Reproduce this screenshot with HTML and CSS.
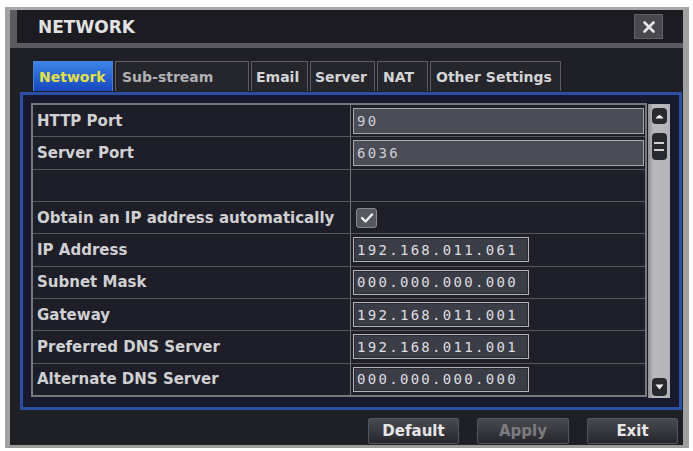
FILE: index.html
```html
<!DOCTYPE html>
<html lang="en">
<head>
  <meta charset="UTF-8">
  <meta name="viewport" content="width=device-width, initial-scale=1.0">
  <title>Network</title>
  <link rel="stylesheet" href="styles.css">
</head>
<body>

  <div class="window">
    <div class="titlebar">
      <span class="title">NETWORK</span>
      <button class="close" type="button">
        <svg width="14" height="14" viewBox="0 0 14 14">
          <path d="M2.5 2.5 L11.5 11.5 M11.5 2.5 L2.5 11.5" stroke="#e8e8e8" stroke-width="2.6" stroke-linecap="round"/>
        </svg>
      </button>
    </div>

    <div class="content">
      <ul class="tabs">
        <li class="tab active">Network</li>
        <li class="tab sub dim">Sub-stream</li>
        <li class="tab email">Email</li>
        <li class="tab server">Server</li>
        <li class="tab nat">NAT</li>
        <li class="tab other">Other Settings</li>
      </ul>

      <div class="panel">
        <div class="grid">
          <div class="row">
            <div class="label">HTTP Port</div>
            <div class="value"><span class="field long">90</span></div>
          </div>
          <div class="row">
            <div class="label">Server Port</div>
            <div class="value"><span class="field long">6036</span></div>
          </div>
          <div class="row">
            <div class="label"></div>
            <div class="value"></div>
          </div>
          <div class="row">
            <div class="label">Obtain an IP address automatically</div>
            <div class="value">
              <span class="check">
                <svg width="14" height="12" viewBox="0 0 14 12">
                  <path d="M2 6 L5.5 9.5 L12 2.5" fill="none" stroke="#f0f0f0" stroke-width="2.4" stroke-linecap="round" stroke-linejoin="round"/>
                </svg>
              </span>
            </div>
          </div>
          <div class="row">
            <div class="label">IP Address</div>
            <div class="value"><span class="field ip">192.168.011.061</span></div>
          </div>
          <div class="row">
            <div class="label">Subnet Mask</div>
            <div class="value"><span class="field ip">000.000.000.000</span></div>
          </div>
          <div class="row">
            <div class="label">Gateway</div>
            <div class="value"><span class="field ip">192.168.011.001</span></div>
          </div>
          <div class="row">
            <div class="label">Preferred DNS Server</div>
            <div class="value"><span class="field ip">192.168.011.001</span></div>
          </div>
          <div class="row">
            <div class="label">Alternate DNS Server</div>
            <div class="value"><span class="field ip">000.000.000.000</span></div>
          </div>
        </div>

        <div class="scrollbar">
          <span class="sb-btn up">
            <svg width="9" height="6" viewBox="0 0 9 6"><path d="M0.5 5.5 Q4.5 -1.5 8.5 5.5 Z" fill="#f2f2f2"/></svg>
          </span>
          <span class="sb-thumb"><i></i><i></i></span>
          <span class="sb-btn down">
            <svg width="9" height="6" viewBox="0 0 9 6"><path d="M0.5 0.5 L8.5 0.5 L4.5 5.5 Z" fill="#f2f2f2"/></svg>
          </span>
        </div>
      </div>

      <div class="actions">
        <button class="btn" type="button">Default</button>
        <button class="btn off" type="button">Apply</button>
        <button class="btn" type="button">Exit</button>
      </div>
    </div>
  </div>

</body>
</html>
```

FILE: styles.css
```css
body {
  margin: 0;
  background: #ffffff;
  font-family: "DejaVu Sans", "Liberation Sans", sans-serif;
}

.window {
  box-sizing: border-box;
  width: 684px;
  height: 441px;
  margin: 7px 0 0 5px;
  border-top: 3px solid #a9a9a9;
  border-left: 5px solid #a2a2a2;
  border-right: 6px solid #a0a0a0;
  border-bottom: 3px solid #9c9c9c;
  background: #1f2026;
  display: flex;
  flex-direction: column;
}

/* barra de titulo */
.titlebar {
  height: 33px;
  display: flex;
  align-items: center;
  background: #1b1b21;
  border-left: 7px solid #5b5b60;
  border-bottom: 5px solid #5a5a60;
  padding-left: 21px;
  padding-right: 20px;
}
.title {
  color: #e2e2e2;
  font-weight: bold;
  font-size: 17px;
}
.close {
  margin-left: auto;
  width: 29px;
  height: 25px;
  padding: 0;
  border: 1px solid #606066;
  background: #48484e;
  display: flex;
  align-items: center;
  justify-content: center;
}

.content {
  flex: 1;
  display: flex;
  flex-direction: column;
}

/* pestañas */
.tabs {
  list-style: none;
  margin: 13px 0 0 23px;
  padding: 0;
  height: 30px;
  display: flex;
  gap: 2px;
}
.tab {
  box-sizing: border-box;
  height: 30px;
  padding: 0 4px;
  display: flex;
  align-items: center;
  white-space: nowrap;
  background: #25262c;
  border: 1px solid #5c5c62;
  border-bottom: none;
  color: #d4d4d6;
  font-weight: bold;
  font-size: 14px;
}
.tab.active {
  width: 80px;
  padding-left: 5px;
  background: linear-gradient(#3d83e6, #1546be);
  border-color: #4b7fd8;
  color: #e4e048;
}
.tab.sub {
  width: 134px;
  padding-left: 6px;
}
.tab.email {
  width: 57px;
}
.tab.server {
  width: 65px;
}
.tab.nat {
  width: 51px;
  padding-left: 5px;
}
.tab.other {
  width: 131px;
  padding-left: 5px;
}
.tab.dim {
  color: #b0b0b4;
}

/* marco azul con la tabla */
.panel {
  box-sizing: border-box;
  width: 662px;
  height: 318px;
  margin: 1px 0 0 10px;
  border: 3px solid #2c4fa6;
  background: #161a2c;
  padding: 8px 0 0 8px;
  display: flex;
  align-items: flex-start;
  gap: 1px;
}
.grid {
  box-sizing: border-box;
  width: 616px;
  height: 294px;
  border: 2px solid #77787e;
  display: flex;
  flex-direction: column;
  background: #1d1e28;
}
.row {
  flex: 1;
  display: flex;
  border-bottom: 1px solid #56575f;
}
.row:last-child {
  border-bottom: none;
}
.label {
  box-sizing: border-box;
  width: 318px;
  padding-left: 4px;
  display: flex;
  align-items: center;
  border-right: 1px solid #74757b;
  color: #d0d0d2;
  font-weight: bold;
  font-size: 15px;
  white-space: nowrap;
}
.value {
  flex: 1;
  display: flex;
  align-items: center;
  padding-left: 2px;
  background: #1e1f29;
}
.field {
  box-sizing: border-box;
  height: 25px;
  display: flex;
  align-items: center;
  padding-left: 3px;
  font-family: "DejaVu Sans Mono", "Liberation Mono", monospace;
  font-size: 14px;
  letter-spacing: 2.3px;
  color: #dedee0;
}
.field.long {
  width: 291px;
  height: 26px;
  background: #4a4d56;
  border: 1px solid #a8a8ac;
  color: #d0d0d4;
}
.field.ip {
  width: 176px;
  background: #3b3d46;
  border: 1px solid #b4b4b8;
  box-shadow: inset 0 0 0 1px #2a2b31;
}
.check {
  box-sizing: border-box;
  width: 21px;
  height: 20px;
  margin-left: 3px;
  border-radius: 3px;
  border: 1px solid #8a8a90;
  background: #56585f;
  display: flex;
  align-items: center;
  justify-content: center;
}

/* barra de desplazamiento */
.scrollbar {
  box-sizing: border-box;
  width: 22px;
  height: 294px;
  margin-top: 1px;
  background: linear-gradient(90deg, #8e8e92, #b9b9bb 25%, #b4b4b6);
  display: flex;
  flex-direction: column;
  align-items: center;
  padding: 4px 0 2px;
}
.sb-btn,
.sb-thumb {
  box-sizing: border-box;
  width: 15px;
  background: #28292e;
  border-radius: 4px;
  display: flex;
  align-items: center;
  justify-content: center;
}
.sb-btn.up {
  height: 16px;
}
.sb-thumb {
  height: 27px;
  margin-top: 9px;
  flex-direction: column;
  gap: 5px;
}
.sb-thumb i {
  width: 10px;
  height: 2px;
  background: #cfcfd2;
}
.sb-btn.down {
  height: 18px;
  margin-top: auto;
}

/* botones inferiores */
.actions {
  display: flex;
  justify-content: flex-end;
  gap: 18px;
  margin: 8px 5px 0 0;
}
.btn {
  height: 26px;
  width: 91px;
  padding: 0;
  border: 1px solid #55565c;
  border-radius: 2px;
  background: linear-gradient(#4a4b50, #26272c);
  color: #e6e6e8;
  font-family: "DejaVu Sans", "Liberation Sans", sans-serif;
  font-weight: bold;
  font-size: 15px;
}
.btn.off {
  width: 92px;
  color: #7c7c80;
}
```
